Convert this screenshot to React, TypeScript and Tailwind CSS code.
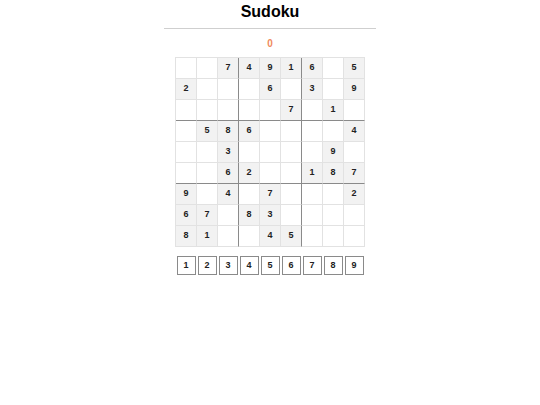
const board = [
  "__74916_5",
  "2___6_3_9",
  "_____7_1_",
  "_586____4",
  "__3____9_",
  "__62__187",
  "9_4_7___2",
  "67_83____",
  "81__45___",
];

export default function App() {
  return (
    <div className="w-[540px] h-[405px] bg-white" style={{ fontFamily: '"Liberation Sans", Arial, sans-serif' }}>
      <div className="w-[212px] mx-auto flex flex-col items-center">
        <h1 className="text-[16px] leading-[20px] font-bold text-black mt-[2px]">Sudoku</h1>
        <div className="w-full h-[1px] bg-[#cfcfcf] mt-[6px]" />
        <div className="text-[10px] leading-[12px] font-bold text-[#f08a5d] mt-[9px]">0</div>
        <div className="mt-[7px] border-l border-t border-[#e2e2e2] flex flex-col">
          {board.map((row, r) => (
            <div key={r} className="flex">
              {row.split("").map((ch, c) => {
                const filled = ch !== "_";
                const right = c === 2 || c === 5 ? "border-r-[#8a8a8a]" : "border-r-[#e2e2e2]";
                const bottom = r === 2 || r === 5 ? "border-b-[#8a8a8a]" : "border-b-[#e2e2e2]";
                return (
                  <div
                    key={c}
                    className={`w-[21px] h-[21px] border-r border-b ${right} ${bottom} flex items-center justify-center text-[9px] font-bold text-[#222] ${filled ? "bg-[#f2f2f2]" : "bg-white"}`}
                  >
                    {filled ? ch : ""}
                  </div>
                );
              })}
            </div>
          ))}
        </div>
        <div className="mt-[9px] flex gap-[2px]">
          {[1, 2, 3, 4, 5, 6, 7, 8, 9].map((n) => (
            <div
              key={n}
              className="w-[19px] h-[19px] border border-[#8a8a8a] bg-white flex items-center justify-center text-[9px] font-bold text-[#222]"
            >
              {n}
            </div>
          ))}
        </div>
      </div>
    </div>
  );
}
